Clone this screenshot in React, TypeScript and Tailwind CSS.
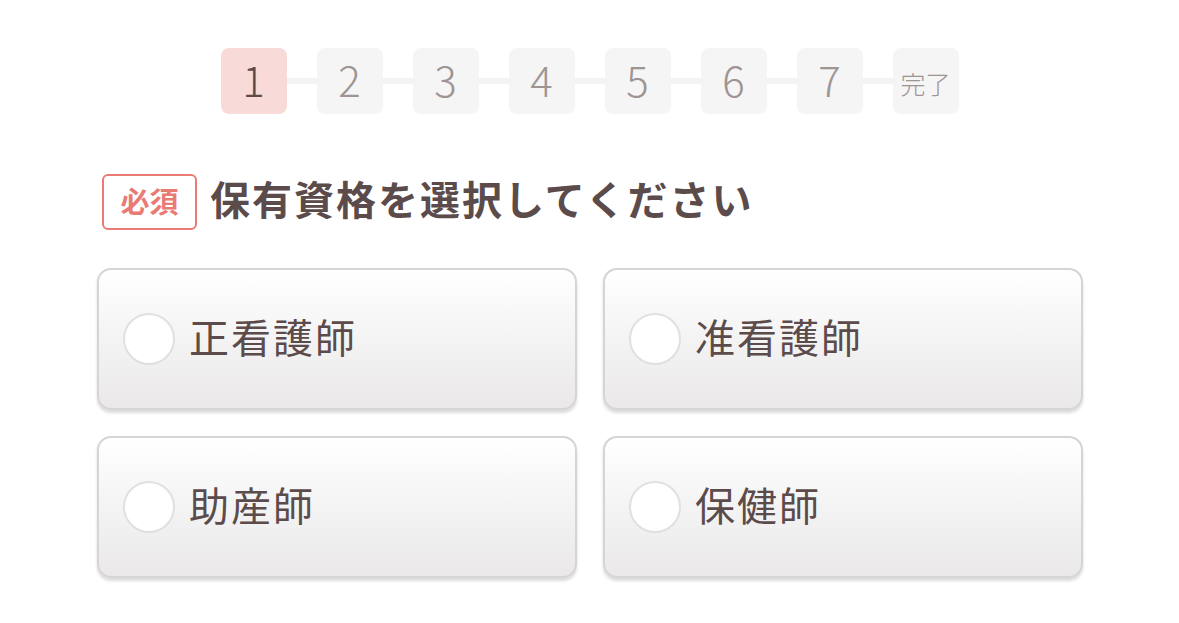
import { useState } from 'react';

const steps = ['1', '2', '3', '4', '5', '6', '7', '完了'];
const options = ['正看護師', '准看護師', '助産師', '保健師'];

export default function App() {
  const [selected, setSelected] = useState<string | null>(null);

  return (
    <div className="min-h-screen bg-white font-['Noto_Sans_CJK_JP','Noto_Sans',sans-serif] text-[#5c4b4b]">
      <div className="flex flex-col pt-12">
        <div className="flex justify-center">
          {steps.map((s, i) => (
            <div key={s} className="flex items-center">
              {i > 0 && <div className="w-[30px] h-[6px] bg-[#f4f4f4]" />}
              <div
                className={
                  i === 0
                    ? 'w-[66px] h-[66px] rounded-lg bg-[#f8dbd8] flex items-center justify-center text-[42px] font-light text-[#5c4b4b] pb-[6px]'
                    : s === '完了'
                      ? 'w-[66px] h-[66px] rounded-lg bg-[#f5f5f5] flex items-center justify-center text-[25px] font-light text-[#9e9494] pt-[6px]'
                      : 'w-[66px] h-[66px] rounded-lg bg-[#f5f5f5] flex items-center justify-center text-[42px] font-light text-[#9e9494] pb-[6px]'
                }
              >
                {s}
              </div>
            </div>
          ))}
        </div>

        <div className="flex items-center gap-[13px] ml-[102px] mt-[60px]">
          <span className="w-[95px] h-[56px] flex items-center justify-center border-2 border-[#e97b75] rounded-md text-[#e97b75] text-[29px] font-bold leading-none pb-[3px]">
            必須
          </span>
          <h1 className="text-[40px] font-bold leading-none tracking-[2px] pb-[8px]">保有資格を選択してください</h1>
        </div>

        <div className="grid grid-cols-[480px_480px] gap-x-[26px] gap-y-[26px] ml-[97px] mt-[38px]">
          {options.map((o) => (
            <button
              key={o}
              onClick={() => setSelected(o)}
              className="h-[142px] rounded-[14px] border-2 border-[#d6d4d4] bg-gradient-to-b from-white to-[#eae8e8] shadow-[0_3px_3px_rgba(0,0,0,0.14)] flex items-center gap-[14px] pl-[24px] text-left"
            >
              <span className="w-[52px] h-[52px] rounded-full bg-white border-2 border-[#e2dfdf] flex items-center justify-center">
                {selected === o && <span className="w-[26px] h-[26px] rounded-full bg-[#e97b75]" />}
              </span>
              <span className="text-[40px] leading-none tracking-[2px] text-[#5c4b4b] pb-[6px]">{o}</span>
            </button>
          ))}
        </div>
      </div>
    </div>
  );
}
